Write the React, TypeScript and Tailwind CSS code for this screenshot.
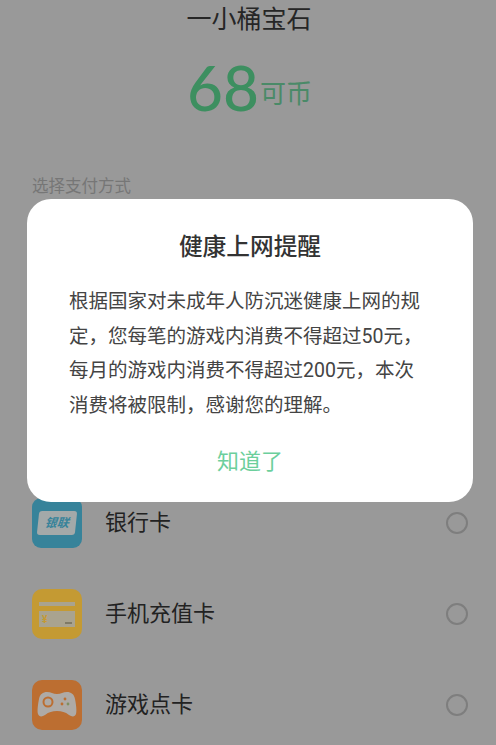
const CJK = "font-['Roboto','Noto_Sans_CJK_SC',sans-serif]";

function Radio() {
  return <div className="w-[22px] h-[22px] rounded-full border-2 border-[#7e7e7e] shrink-0" />;
}

function Row({ icon, label }: { icon: React.ReactNode; label: string }) {
  return (
    <div className="h-[91px] flex items-center pl-8 pr-[28px]">
      {icon}
      <div className="ml-[23px] text-[22px] leading-none text-[#222222] flex-1">{label}</div>
      <Radio />
    </div>
  );
}

function BankIcon() {
  return (
    <div className="w-[50px] h-[50px] rounded-[9px] bg-[#37839a] flex items-center justify-center">
      <div className="w-[38px] h-[24px] rounded-[3px] bg-[#a3a9a9] -skew-x-6 flex items-center justify-center text-[12px] leading-none font-bold italic text-[#37839a]">
        银联
      </div>
    </div>
  );
}

function PhoneCardIcon() {
  return (
    <div className="w-[50px] h-[50px] rounded-[10px] bg-[#c49a33] flex items-center justify-center">
      <div className="w-[36px] h-[25px] bg-[#a9a38f] flex flex-col">
        <div className="h-[5px] bg-[#c49a33] mt-[4px]" />
        <div className="flex-1 flex items-end justify-between px-[3px] pb-[2px]">
          <span className="text-[10px] leading-none font-bold text-[#c49a33]">¥</span>
          <span className="w-[7px] h-[2px] bg-[#7f7a66] mb-[1px]" />
        </div>
      </div>
    </div>
  );
}

function GameIcon() {
  return (
    <div className="w-[50px] h-[50px] rounded-[10px] bg-[#bc6e31] flex items-center justify-center">
      <svg width="40" height="32" viewBox="0 0 40 32">
        <path
          d="M10 3 C6 3 3 5 2 10 C1 15 0 22 1 25 C2 28 5 28 8 26 C12 23 15 22 20 22 C25 22 28 23 32 26 C35 28 38 28 39 25 C40 22 39 15 38 10 C37 5 34 3 30 3 C26 3 24 5 20 5 C16 5 14 3 10 3 Z"
          fill="#aeaaa6"
        />
        <circle cx="11" cy="13" r="4.5" fill="none" stroke="#bc6e31" strokeWidth="2" />
        <circle cx="28" cy="10" r="1.4" fill="#bc6e31" />
        <circle cx="25" cy="15" r="1.4" fill="#bc6e31" />
        <circle cx="31" cy="15" r="1.4" fill="#7f8f60" />
      </svg>
    </div>
  );
}

export default function App() {
  return (
    <div className={`relative w-[496px] h-[745px] overflow-hidden bg-[#999999] ${CJK}`}>
      <div className="text-center text-[25px] leading-none text-[#262626] pt-[7px] pl-[2px]">一小桶宝石</div>
      <div className="flex items-end justify-center mt-[24px] h-[62px] pl-[3px]">
        <span className="text-[62px] leading-[62px] font-medium text-[#3d8f60] font-['Lato',sans-serif]">68</span>
        <span className="text-[26px] leading-none text-[#4a8a68] mb-[11px] ml-[1px]">可币</span>
      </div>
      <div className="pl-8 mt-[61px] text-[16.5px] leading-none text-[#767676]">选择支付方式</div>

      <div className="mt-[282px]">
        <Row icon={<BankIcon />} label="银行卡" />
        <Row icon={<PhoneCardIcon />} label="手机充值卡" />
        <Row icon={<GameIcon />} label="游戏点卡" />
      </div>

      <div className="absolute left-[27px] top-[199px] w-[446px] h-[303px] rounded-[24px] bg-white px-[42px] pt-[37px]">
        <div className="text-center text-[23.7px] leading-none text-[#333333] font-medium">健康上网提醒</div>
        <div className="mt-[25px] text-[19.5px] leading-[34.8px] text-[#444444]">
          <div>根据国家对未成年人防沉迷健康上网的规</div>
          <div>定，您每笔的游戏内消费不得超过50元，</div>
          <div>每月的游戏内消费不得超过200元，本次</div>
          <div>消费将被限制，感谢您的理解。</div>
        </div>
        <div className="mt-[27px] text-center text-[22px] leading-none text-[#6ccf9c]">知道了</div>
      </div>
    </div>
  );
}
